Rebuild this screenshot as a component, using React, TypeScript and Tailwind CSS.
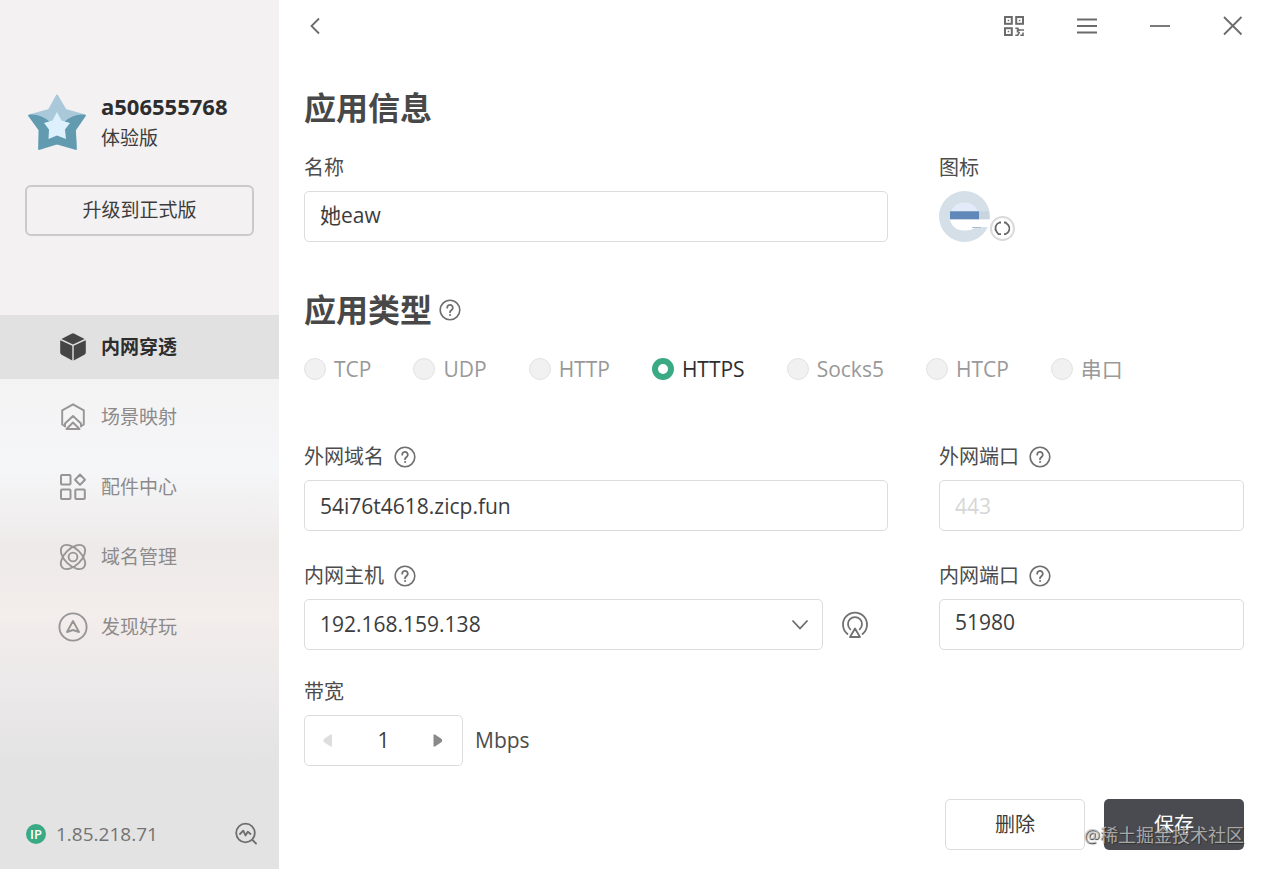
import type React from "react"
import { useState } from "react"

type IconProps = { className?: string }

const StarLogo: React.FC = () => (
  <svg width="60" height="60" viewBox="0 0 60 60" aria-hidden="true">
    <path
      d="M30 2.5 38.5 17 58 22.5 48 37 49 56 30 50.5 12 56 12.500 37 2 22.5 22 17Z"
      fill="#a9c9da"
      stroke="#a9c9da"
      strokeWidth="2"
      strokeLinejoin="round"
    />
    <path
      d="M2 22.5C10 21.500 19 25 24 31L21 45 30 42 39 45 36 31C41 25 50 21.500 58 22.5L48 37 49 56 30 50.5 12 56 12.500 37Z"
      fill="#629bb0"
      stroke="#629bb0"
      strokeWidth="1.5"
      strokeLinejoin="round"
    />
    <path d="M30 19 34.5 27.5 43 30 38 36.5 39 46 30 42.5 21.5 46 22 36.5 17 30 25.5 27.5Z" fill="#dcf1fc" />
  </svg>
)

const CubeIcon: React.FC<IconProps> = ({ className }) => (
  <svg width="30" height="30" viewBox="0 0 30 30" className={className} fill="currentColor" aria-hidden="true">
    <path d="M13.6 1.7a3 3 0 0 1 2.8 0L26.6 7 15 12.4 3.4 7Z" />
    <path d="M2.4 8.2 14.3 13.7V28.4L3.6 22.8A2.6 2.6 0 0 1 2.2 20.5V9Z" />
    <path d="M27.6 8.2 15.7 13.7V28.4L26.4 22.8A2.6 2.6 0 0 0 27.8 20.5V9Z" />
  </svg>
)

const SceneIcon: React.FC<IconProps> = ({ className }) => (
  <svg
    width="30"
    height="30"
    viewBox="0 0 30 30"
    className={className}
    fill="none"
    stroke="currentColor"
    strokeWidth="1.9"
    strokeLinejoin="round"
    strokeLinecap="round"
    aria-hidden="true"
  >
    <path d="M7 24.2 4.2 22.5V8.3L15 2.3 25.800 8.3V22.5L23 24.2" />
    <path d="M7 24.2V21.5L15 14 23 21.5V24.2" />
    <path d="M8.5 27 15 20.500 21.5 27Z" />
  </svg>
)

const PartsIcon: React.FC<IconProps> = ({ className }) => (
  <svg
    width="30"
    height="30"
    viewBox="0 0 30 30"
    className={className}
    fill="none"
    stroke="currentColor"
    strokeWidth="2"
    strokeLinejoin="round"
    aria-hidden="true"
  >
    <rect x="3" y="3" width="9.5" height="9.5" rx="1" />
    <path d="M22 2.5 27 7.7 22 12.9 17 7.7Z" />
    <rect x="3" y="17.5" width="9.5" height="9.5" rx="1" />
    <rect x="17.3" y="17.5" width="9.5" height="9.5" rx="1" />
  </svg>
)

const DomainIcon: React.FC<IconProps> = ({ className }) => (
  <svg
    width="30"
    height="30"
    viewBox="0 0 30 30"
    className={className}
    fill="none"
    stroke="currentColor"
    strokeWidth="1.9"
    aria-hidden="true"
  >
    <ellipse cx="15" cy="15" rx="15" ry="8.3" transform="rotate(45 15 15)" />
    <ellipse cx="15" cy="15" rx="15" ry="8.3" transform="rotate(-45 15 15)" />
    <circle cx="15" cy="15" r="4.4" />
  </svg>
)

const DiscoverIcon: React.FC<IconProps> = ({ className }) => (
  <svg
    width="30"
    height="30"
    viewBox="0 0 30 30"
    className={className}
    fill="none"
    stroke="currentColor"
    strokeWidth="1.9"
    strokeLinejoin="round"
    aria-hidden="true"
  >
    <circle cx="15" cy="15" r="13.6" />
    <path d="M15 9 21 20 15 18 9 20Z" />
  </svg>
)

const HelpIcon: React.FC = () => (
  <svg
    width="22"
    height="22"
    viewBox="0 0 22 22"
    fill="none"
    stroke="#6f6f6f"
    strokeWidth="1.6"
    strokeLinecap="round"
    aria-hidden="true"
  >
    <circle cx="11" cy="11" r="9.8" />
    <path d="M8.2 8.7a2.8 2.8 0 1 1 4.6 2.1C11.7 11.7 11 12 11 13.3" strokeWidth="1.8" />
    <circle cx="11" cy="16" r="0.6" fill="#6f6f6f" strokeWidth="0.8" />
  </svg>
)

const QrIcon: React.FC = () => (
  <svg width="22" height="22" viewBox="0 0 22 22" fill="none" stroke="#6b6b6b" strokeWidth="2" aria-hidden="true">
    <rect x="2" y="2" width="6.8" height="6.8" />
    <rect x="13.2" y="2" width="6.8" height="6.8" />
    <rect x="2" y="13.2" width="6.8" height="6.8" />
    <path d="M4.7 5.4h1.5M15.9 5.4h1.5M4.7 16.6h1.5" strokeWidth="1.5" />
    <path d="M12.3 13.2h2.500l1.500 3M21 15h-6.500v2.500M12.300 20.200h2.500L16.500 17M17.3 20.200H20v-2.700" strokeWidth="1.6" />
  </svg>
)

const AppIcon: React.FC = () => (
  <svg width="51" height="51" viewBox="0 0 51 51" aria-hidden="true">
    <circle cx="25.5" cy="25.5" r="25.5" fill="#d4dfe7" />
    <path d="M12 20a15 15 0 0 1 27 0Z" fill="#e3ebfa" />
    <path d="M11 28.300H51V36H47L37 36.500C34 38 32 39.5 25 39.5 17 39.5 12 35 11 28.300Z" fill="#fff" />
    <path d="M33 36.5h9" stroke="#aebdca" />
    <path d="M40 20.300h9.500l1 8H40Z" fill="#c8d5df" />
    <path d="M11 20.3h29v8H11Z" fill="#6089b9" />
  </svg>
)

const RadarIcon: React.FC = () => (
  <svg
    width="28"
    height="28"
    viewBox="0 0 28 28"
    fill="none"
    stroke="#707070"
    strokeWidth="1.8"
    strokeLinecap="round"
    strokeLinejoin="round"
    aria-hidden="true"
  >
    <path d="M6.5 23A12 12 0 1 1 21.5 23" />
    <path d="M9.3 18.3A7 7 0 1 1 18.7 18.3" />
    <path d="M14 17.5 19 26H9Z" />
  </svg>
)

const navItems = [
  { label: "内网穿透", icon: CubeIcon },
  { label: "场景映射", icon: SceneIcon },
  { label: "配件中心", icon: PartsIcon },
  { label: "域名管理", icon: DomainIcon },
  { label: "发现好玩", icon: DiscoverIcon },
]

const appTypes = ["TCP", "UDP", "HTTP", "HTTPS", "Socks5", "HTCP", "串口"]

const inputClass =
  "block h-[51px] w-full rounded-[5px] border border-[#dcdcdc] bg-white px-[15px] text-[21px] text-[#3c3c3c] outline-none placeholder:text-[#d6d6d6]"

interface FieldProps {
  id: string
  label: string
  help?: boolean
  children: React.ReactNode
}

const Field: React.FC<FieldProps> = ({ id, label, help, children }) => (
  <div>
    <div className="mb-[7px] flex items-center gap-[10px]">
      <label htmlFor={id} className="text-xl leading-8 text-[#4c4c4c]">
        {label}
      </label>
      {help && (
        <button type="button" aria-label={`${label}说明`}>
          <HelpIcon />
        </button>
      )}
    </div>
    {children}
  </div>
)

const Sidebar: React.FC = () => (
  <aside className="flex w-[279px] shrink-0 flex-col bg-[linear-gradient(180deg,#f3f1f2_0%,#f3f1f2_36%,#f4f3f4_44%,#f5f6f8_54%,#f3f2f3_57%,#eeeaea_63%,#f3edeb_71%,#ebe9ea_79%,#e4e3e4_88%,#e3e3e3_100%)]">
    <div className="flex items-center gap-[14px] pt-[91px] pl-[27px]">
      <StarLogo />
      <div>
        <p className="text-[22px] leading-[30px] font-bold text-[#2d2d2d]">a506555768</p>
        <p className="text-[19px] leading-[34px] text-[#3c3c3c]">体验版</p>
      </div>
    </div>
    <div className="mt-[30px] px-[25px]">
      <button type="button" className="h-[51px] w-full rounded-md border-2 border-[#cbc9ca] text-[19px] text-[#3c3c3c]">
        升级到正式版
      </button>
    </div>

    <nav className="mt-[79px] flex flex-col gap-[6px]">
      {navItems.map(({ label, icon: Icon }, index) => (
        <a
          key={label}
          href="#"
          className={
            index === 0
              ? "flex h-16 items-center gap-[13px] bg-[#e1e1e1] pl-[58px] text-[19px] font-bold text-[#2d2d2d]"
              : "flex h-16 items-center gap-[13px] pl-[58px] text-[19px] text-[#8c8a8a]"
          }
        >
          <Icon className={index === 0 ? "text-[#454545]" : "text-[#979595]"} />
          {label}
        </a>
      ))}
    </nav>

    <div className="mt-auto flex items-center pr-[21px] pb-[19px] pl-[26px]">
      <span className="flex size-5 items-center justify-center rounded-full bg-[#3aaa84] text-[13px] leading-5 font-semibold text-white">
        IP
      </span>
      <span className="ml-[10px] text-[19px] leading-8 text-[#737373]">1.85.218.71</span>
      <button type="button" aria-label="网络诊断" className="ml-auto">
        <svg
          width="24"
          height="24"
          viewBox="0 0 24 24"
          fill="none"
          stroke="#6e6e6e"
          strokeWidth="1.8"
          strokeLinecap="round"
          strokeLinejoin="round"
        >
          <circle cx="11.500" cy="11" r="9.3" />
          <path d="M18.500 18 22 21.500M6 12 9.300 8.7 11.500 13.5 13.800 9.8 16.500 12" />
        </svg>
      </button>
    </div>
  </aside>
)

const TitleBar: React.FC = () => (
  <header className="flex h-[52px] items-center justify-between">
    <button type="button" aria-label="返回">
      <svg width="22" height="22" viewBox="0 0 22 22" fill="none" stroke="#6b6b6b" strokeWidth="1.8">
        <path d="M15 3.500 7.500 11 15 18.500" />
      </svg>
    </button>
    <div className="flex items-center gap-[51px]">
      <button type="button" aria-label="二维码">
        <QrIcon />
      </button>
      <button type="button" aria-label="菜单">
        <svg width="22" height="22" viewBox="0 0 22 22" stroke="#6b6b6b" strokeWidth="1.8">
          <path d="M1 4.500h20M1 11h20M1 17.500h20" />
        </svg>
      </button>
      <button type="button" aria-label="最小化">
        <svg width="22" height="22" viewBox="0 0 22 22" stroke="#6b6b6b" strokeWidth="1.8">
          <path d="M1 11h20" />
        </svg>
      </button>
      <button type="button" aria-label="关闭">
        <svg width="22" height="22" viewBox="0 0 22 22" stroke="#6b6b6b" strokeWidth="1.8">
          <path d="M2 2 19.500 19.500M19.500 2 2 19.500" />
        </svg>
      </button>
    </div>
  </header>
)

const App: React.FC = () => {
  const [name, setName] = useState("她eaw")
  const [domain, setDomain] = useState("54i76t4618.zicp.fun")
  const [port, setPort] = useState("51980")
  const [bandwidth, setBandwidth] = useState(1)

  return (
    <div className="flex min-h-screen bg-white font-['Open_Sans','Noto_Sans_CJK_SC',sans-serif]">
      <Sidebar />

      <main className="min-w-0 flex-1 px-[25px] pb-[19px]">
        <TitleBar />

        <form onSubmit={(e) => e.preventDefault()} className="pt-8">
          <h2 className="text-[32px] leading-[48px] font-bold text-[#484848]">应用信息</h2>
          <div className="mt-5 grid grid-cols-[584fr_305fr] gap-x-[51px]">
            <Field id="name" label="名称">
              <input
                id="name"
                value={name}
                onChange={(e) => setName(e.target.value)}
                className={`${inputClass} pb-1.5`}
              />
            </Field>
            <Field id="icon" label="图标">
              <div className="relative w-[51px]">
                <AppIcon />
                <button
                  id="icon"
                  type="button"
                  aria-label="更换图标"
                  className="absolute top-[25px] left-[51px] flex size-[25px] items-center justify-center rounded-full border-2 border-[#dadada] bg-white"
                >
                  <svg
                    width="19"
                    height="19"
                    viewBox="0 0 19 19"
                    className="shrink-0"
                    fill="none"
                    stroke="#666"
                    strokeWidth="1.8"
                  >
                    <path d="M8 3.500H6.500A6 6 0 0 0 3.800 13L5.500 15.200H8M11 3.500H12.500L15.300 6A6 6 0 0 1 12.500 15.200H11" />
                  </svg>
                </button>
              </div>
            </Field>
          </div>

          <div className="mt-11 flex items-center gap-[7px]">
            <h2 className="text-[32px] leading-[48px] font-bold text-[#484848]">应用类型</h2>
            <button type="button" aria-label="应用类型说明">
              <HelpIcon />
            </button>
          </div>
          <div className="mt-5 flex flex-wrap gap-x-[42px]">
            {appTypes.map((type) => (
              <label
                key={type}
                className="flex items-center gap-2 text-[21px] leading-[30px] text-[#999] has-checked:text-[#2d2d2d]"
              >
                <input
                  type="radio"
                  name="type"
                  defaultChecked={type === "HTTPS"}
                  disabled={type !== "HTTPS"}
                  className="size-[22px] appearance-none rounded-full border border-[#e2e2e2] bg-[#f1f1f1] checked:border-[6px] checked:border-[#3aaa84] checked:bg-white"
                />
                {type}
              </label>
            ))}
          </div>

          <div className="mt-[57px] grid grid-cols-[584fr_305fr] gap-x-[51px] gap-y-[29px]">
            <Field id="domain" label="外网域名" help>
              <input id="domain" value={domain} onChange={(e) => setDomain(e.target.value)} className={inputClass} />
            </Field>
            <Field id="outer-port" label="外网端口" help>
              <input id="outer-port" placeholder="443" disabled className={inputClass} />
            </Field>
            <Field id="host" label="内网主机" help>
              <div className="flex items-center gap-[18px] pr-[19px]">
                <div className="relative flex-1">
                  <select id="host" className={`${inputClass} appearance-none`}>
                    <option>192.168.159.138</option>
                  </select>
                  <svg
                    width="18"
                    height="18"
                    viewBox="0 0 18 18"
                    className="pointer-events-none absolute inset-y-0 right-[14px] my-auto"
                    fill="none"
                    stroke="#6b6b6b"
                    strokeWidth="1.8"
                  >
                    <path d="M1.500 4.500 9 12.500 16.500 4.500" />
                  </svg>
                </div>
                <button type="button" aria-label="扫描主机">
                  <RadarIcon />
                </button>
              </div>
            </Field>
            <Field id="inner-port" label="内网端口" help>
              <input
                id="inner-port"
                value={port}
                onChange={(e) => setPort(e.target.value)}
                className={`${inputClass} pb-1.5`}
              />
            </Field>
          </div>

          <div className="mt-[26px]">
            <Field id="bandwidth" label="带宽">
              <div className="flex items-center gap-3">
                <div className="flex h-[51px] w-[159px] items-center justify-between rounded-[5px] border border-[#dcdcdc] px-[17px]">
                  <button
                    type="button"
                    aria-label="减少"
                    disabled={bandwidth <= 1}
                    onClick={() => setBandwidth(bandwidth - 1)}
                    className="text-[#8a8a8a] disabled:text-[#dedede]"
                  >
                    <svg width="12" height="14" viewBox="0 0 12 14" fill="currentColor">
                      <path d="M10 0.500v12H8.500L1.500 7.700V5.300L8.500 0.500Z" />
                    </svg>
                  </button>
                  <input
                    id="bandwidth"
                    value={bandwidth}
                    readOnly
                    className="w-16 bg-transparent text-center text-[21px] text-[#3c3c3c] outline-none"
                  />
                  <button
                    type="button"
                    aria-label="增加"
                    onClick={() => setBandwidth(bandwidth + 1)}
                    className="text-[#8a8a8a] disabled:text-[#dedede]"
                  >
                    <svg width="12" height="14" viewBox="0 0 12 14" fill="currentColor">
                      <path d="M0.500 0.500v12H2L9 7.700V5.300L2 0.500Z" />
                    </svg>
                  </button>
                </div>
                <span className="text-[21px] text-[#4c4c4c]">Mbps</span>
              </div>
            </Field>
          </div>

          <div className="relative mt-[33px] flex justify-end gap-[19px]">
            <button
              type="button"
              className="h-[51px] w-[140px] rounded-[5px] border border-[#dcdcdc] text-xl text-[#3c3c3c]"
            >
              删除
            </button>
            <button type="submit" className="h-[51px] w-[140px] rounded-[5px] bg-[#4a4b50] text-xl text-white">
              保存
            </button>
            <span className="pointer-events-none absolute right-0 bottom-0 text-lg leading-[30px] whitespace-nowrap text-[#c4c4c4]/80 [text-shadow:1px_1px_1px_#333]">
              @稀土掘金技术社区
            </span>
          </div>
        </form>
      </main>
    </div>
  )
}

export default App
